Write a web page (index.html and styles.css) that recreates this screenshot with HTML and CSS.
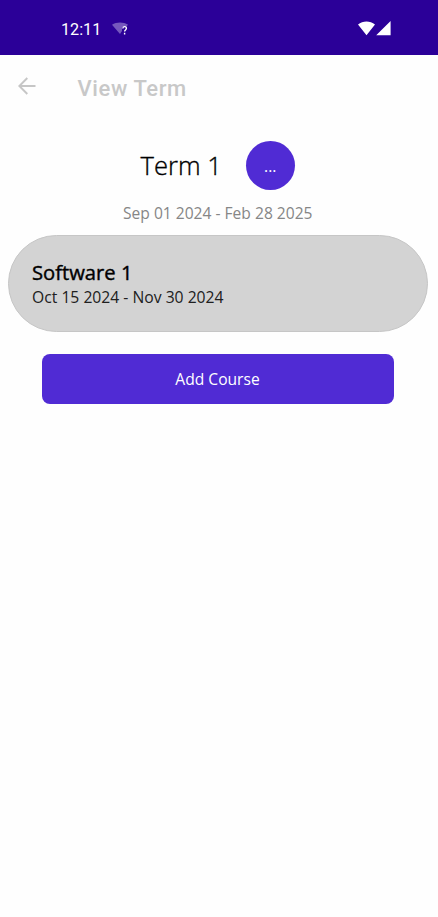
FILE: index.html
```html
<!DOCTYPE html>
<html lang="en">
<head>
<meta charset="utf-8">
<title>View Term</title>
<link rel="stylesheet" href="styles.css">
</head>
<body>
<div class="status">
  <span class="clock">12:11</span>
  <svg class="wifi-unknown" width="18" height="14" viewBox="0 0 18 14"><path d="M0 2.8C4.5-.4 11.5-.4 16 2.8L14 5H10V9L8 12Z" fill="#7558bd"/><path d="M10.8 6.4c0-2.4 3.6-2.4 3.6-.1 0 1.6-1.8 1.6-1.8 3.3M12.6 10.8v1.6" fill="none" stroke="#fff" stroke-width="1.4"/></svg>
  <svg class="signal" width="33" height="15" viewBox="0 0 33 15"><path d="M0 3.6C4.8-.5 12.2-.5 17 3.6L8.5 14.3ZM32.6 0V14.3H18.2Z" fill="#fff"/></svg>
</div>
<header class="toolbar">
  <svg class="back" width="18" height="18" viewBox="0 0 18 18"><path d="M17.5 9H1.5M9.3 1 1.3 9l8 8" fill="none" stroke="#c6c6c6" stroke-width="1.9"/></svg>
  <h1 class="title">View Term</h1>
</header>
<main>
  <div class="term">
    <h2 class="term-name">Term 1</h2>
    <button class="more">...</button>
  </div>
  <p class="term-dates">Sep 01 2024 - Feb 28 2025</p>
  <section class="course">
    <h3 class="course-name">Software 1</h3>
    <p class="course-dates">Oct 15 2024 - Nov 30 2024</p>
  </section>
  <button class="add">Add Course</button>
</main>
</body>
</html>
```
FILE: styles.css
```css
* { box-sizing: border-box; }
body { margin: 0; min-height: 917px; background: #fefefe; font-family: "Open Sans", sans-serif; color: #000; }
h1, h2, h3, p { margin: 0; font-weight: 400; }
button { border: 0; padding: 0; font: 400 15.6px/20px "Open Sans", sans-serif; color: #fff; background: #502bd4; }
.status { height: 55px; padding: 4px 47px 0 61px; display: flex; align-items: center; background: #2b0098; color: #fff; }
.clock { width: 51px; font: 400 16.2px/20px Roboto, sans-serif; }
.wifi-unknown { margin-top: -1px; }
.signal { margin-left: auto; margin-top: -2px; }
.toolbar { height: 65px; padding-left: 18px; display: flex; align-items: center; }
.back { margin-top: -3px; }
.title { margin: 2px 0 0 41.5px; font: 500 22px/28px Roboto, sans-serif; letter-spacing: 0.6px; color: #c8c8c8; }
.term { height: 49px; margin-top: 21px; padding-left: 140.5px; display: flex; align-items: center; }
.term-name { width: 105px; font-size: 25.6px; font-weight: 300; line-height: 34px; white-space: nowrap; -webkit-text-stroke: 0.35px #000; }
.more { width: 49.5px; height: 49.5px; border-radius: 50%; }
.term-dates { margin: 12px 0 0 123px; font-size: 15.6px; line-height: 22px; color: #868686; white-space: nowrap; }
.course { height: 97px; margin: 11px 10px 0 8px; padding: 23px 24px 0 23px; background: #d3d3d3; border: 1px solid #c6c6c6; border-radius: 49px; }
.course-name { font-size: 20.2px; line-height: 26px; -webkit-text-stroke: 0.4px #000; }
.course-dates { margin-top: 1px; font-size: 15.7px; line-height: 22px; color: #202020; }
.add { display: block; width: 352px; height: 50px; margin: 22px 0 0 41.5px; border-radius: 8px; }
```
